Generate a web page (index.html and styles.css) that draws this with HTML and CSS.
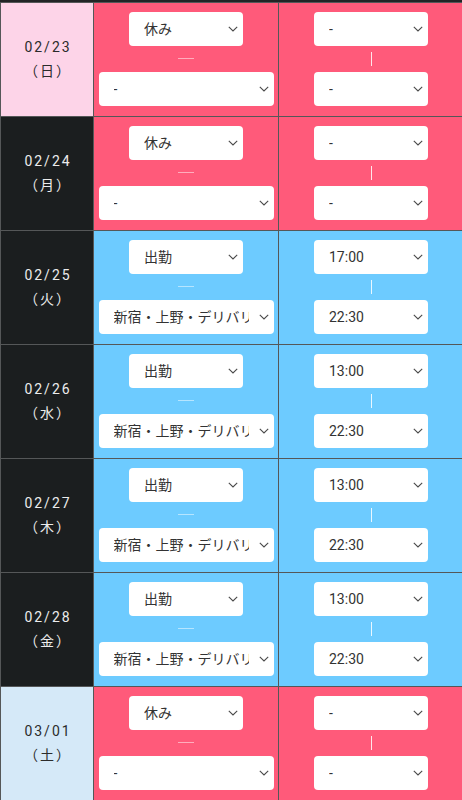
FILE: index.html
```html
<!DOCTYPE html>
<html lang="ja">
<head>
<meta charset="utf-8">
<link rel="stylesheet" href="styles.css">
</head>
<body>
<div class="sheet">
  <div class="date sun"><span>02/23</span><span>（日）</span></div>
  <div class="cell off">
    <div class="sel narrow"><span class="txt">休み</span><svg class="chev" viewBox="0 0 10 6"><path d="M0.8 0.8 L5 5 L9.2 0.8"/></svg></div>
    <div class="gap"><i class="hsep"></i></div>
    <div class="sel wide"><span class="txt">-</span><svg class="chev" viewBox="0 0 10 6"><path d="M0.8 0.8 L5 5 L9.2 0.8"/></svg></div>
  </div>
  <div class="cell off">
    <div class="sel narrow"><span class="txt">-</span><svg class="chev" viewBox="0 0 10 6"><path d="M0.8 0.8 L5 5 L9.2 0.8"/></svg></div>
    <div class="gap"><i class="vsep"></i></div>
    <div class="sel narrow"><span class="txt">-</span><svg class="chev" viewBox="0 0 10 6"><path d="M0.8 0.8 L5 5 L9.2 0.8"/></svg></div>
  </div>

  <div class="date wk"><span>02/24</span><span>（月）</span></div>
  <div class="cell off">
    <div class="sel narrow"><span class="txt">休み</span><svg class="chev" viewBox="0 0 10 6"><path d="M0.8 0.8 L5 5 L9.2 0.8"/></svg></div>
    <div class="gap"><i class="hsep"></i></div>
    <div class="sel wide"><span class="txt">-</span><svg class="chev" viewBox="0 0 10 6"><path d="M0.8 0.8 L5 5 L9.2 0.8"/></svg></div>
  </div>
  <div class="cell off">
    <div class="sel narrow"><span class="txt">-</span><svg class="chev" viewBox="0 0 10 6"><path d="M0.8 0.8 L5 5 L9.2 0.8"/></svg></div>
    <div class="gap"><i class="vsep"></i></div>
    <div class="sel narrow"><span class="txt">-</span><svg class="chev" viewBox="0 0 10 6"><path d="M0.8 0.8 L5 5 L9.2 0.8"/></svg></div>
  </div>

  <div class="date wk"><span>02/25</span><span>（火）</span></div>
  <div class="cell on">
    <div class="sel narrow"><span class="txt">出勤</span><svg class="chev" viewBox="0 0 10 6"><path d="M0.8 0.8 L5 5 L9.2 0.8"/></svg></div>
    <div class="gap"><i class="hsep"></i></div>
    <div class="sel wide"><span class="txt">新宿・上野・デリバリー</span><svg class="chev" viewBox="0 0 10 6"><path d="M0.8 0.8 L5 5 L9.2 0.8"/></svg></div>
  </div>
  <div class="cell on">
    <div class="sel narrow"><span class="txt">17:00</span><svg class="chev" viewBox="0 0 10 6"><path d="M0.8 0.8 L5 5 L9.2 0.8"/></svg></div>
    <div class="gap"><i class="vsep"></i></div>
    <div class="sel narrow"><span class="txt">22:30</span><svg class="chev" viewBox="0 0 10 6"><path d="M0.8 0.8 L5 5 L9.2 0.8"/></svg></div>
  </div>

  <div class="date wk"><span>02/26</span><span>（水）</span></div>
  <div class="cell on">
    <div class="sel narrow"><span class="txt">出勤</span><svg class="chev" viewBox="0 0 10 6"><path d="M0.8 0.8 L5 5 L9.2 0.8"/></svg></div>
    <div class="gap"><i class="hsep"></i></div>
    <div class="sel wide"><span class="txt">新宿・上野・デリバリー</span><svg class="chev" viewBox="0 0 10 6"><path d="M0.8 0.8 L5 5 L9.2 0.8"/></svg></div>
  </div>
  <div class="cell on">
    <div class="sel narrow"><span class="txt">13:00</span><svg class="chev" viewBox="0 0 10 6"><path d="M0.8 0.8 L5 5 L9.2 0.8"/></svg></div>
    <div class="gap"><i class="vsep"></i></div>
    <div class="sel narrow"><span class="txt">22:30</span><svg class="chev" viewBox="0 0 10 6"><path d="M0.8 0.8 L5 5 L9.2 0.8"/></svg></div>
  </div>

  <div class="date wk"><span>02/27</span><span>（木）</span></div>
  <div class="cell on">
    <div class="sel narrow"><span class="txt">出勤</span><svg class="chev" viewBox="0 0 10 6"><path d="M0.8 0.8 L5 5 L9.2 0.8"/></svg></div>
    <div class="gap"><i class="hsep"></i></div>
    <div class="sel wide"><span class="txt">新宿・上野・デリバリー</span><svg class="chev" viewBox="0 0 10 6"><path d="M0.8 0.8 L5 5 L9.2 0.8"/></svg></div>
  </div>
  <div class="cell on">
    <div class="sel narrow"><span class="txt">13:00</span><svg class="chev" viewBox="0 0 10 6"><path d="M0.8 0.8 L5 5 L9.2 0.8"/></svg></div>
    <div class="gap"><i class="vsep"></i></div>
    <div class="sel narrow"><span class="txt">22:30</span><svg class="chev" viewBox="0 0 10 6"><path d="M0.8 0.8 L5 5 L9.2 0.8"/></svg></div>
  </div>

  <div class="date wk"><span>02/28</span><span>（金）</span></div>
  <div class="cell on">
    <div class="sel narrow"><span class="txt">出勤</span><svg class="chev" viewBox="0 0 10 6"><path d="M0.8 0.8 L5 5 L9.2 0.8"/></svg></div>
    <div class="gap"><i class="hsep"></i></div>
    <div class="sel wide"><span class="txt">新宿・上野・デリバリー</span><svg class="chev" viewBox="0 0 10 6"><path d="M0.8 0.8 L5 5 L9.2 0.8"/></svg></div>
  </div>
  <div class="cell on">
    <div class="sel narrow"><span class="txt">13:00</span><svg class="chev" viewBox="0 0 10 6"><path d="M0.8 0.8 L5 5 L9.2 0.8"/></svg></div>
    <div class="gap"><i class="vsep"></i></div>
    <div class="sel narrow"><span class="txt">22:30</span><svg class="chev" viewBox="0 0 10 6"><path d="M0.8 0.8 L5 5 L9.2 0.8"/></svg></div>
  </div>

  <div class="date sat"><span>03/01</span><span>（土）</span></div>
  <div class="cell off">
    <div class="sel narrow"><span class="txt">休み</span><svg class="chev" viewBox="0 0 10 6"><path d="M0.8 0.8 L5 5 L9.2 0.8"/></svg></div>
    <div class="gap"><i class="hsep"></i></div>
    <div class="sel wide"><span class="txt">-</span><svg class="chev" viewBox="0 0 10 6"><path d="M0.8 0.8 L5 5 L9.2 0.8"/></svg></div>
  </div>
  <div class="cell off">
    <div class="sel narrow"><span class="txt">-</span><svg class="chev" viewBox="0 0 10 6"><path d="M0.8 0.8 L5 5 L9.2 0.8"/></svg></div>
    <div class="gap"><i class="vsep"></i></div>
    <div class="sel narrow"><span class="txt">-</span><svg class="chev" viewBox="0 0 10 6"><path d="M0.8 0.8 L5 5 L9.2 0.8"/></svg></div>
  </div>
</div>
</body>
</html>
```
FILE: styles.css
```css
html, body {
  margin: 0;
  padding: 0;
  overflow: hidden;
  background: #ffffff;
}

body {
  font-family: "Roboto", "Noto Sans CJK JP", sans-serif;
  font-size: 14px;
}

.sheet {
  display: grid;
  grid-template-columns: 92px 184px 184px;
  grid-auto-rows: 113px;
  gap: 1px;
  width: 464px;
  padding: 1px 0 0 1px;
  border-top: 2px solid #222425;
  background: #555758;
}

.date {
  display: flex;
  flex-direction: column;
  align-items: center;
  justify-content: center;
  line-height: 24px;
  letter-spacing: 2px;
  padding-left: 2px;
  padding-bottom: 1px;
  color: #2b2b2b;
}

.date.sun { background: #fdd4e8; }
.date.sat { background: #d5e9f8; }
.date.wk { background: #1b1e1f; color: #ececec; }

.cell {
  display: flex;
  flex-direction: column;
  align-items: center;
  padding-top: 9px;
}

.cell.off { background: #ff5a7a; }
.cell.on { background: #6dcbff; }

.sel {
  display: flex;
  align-items: center;
  height: 34px;
  box-sizing: border-box;
  background: #ffffff;
  border-radius: 4px;
  padding: 0 5px 0 15px;
  color: #333333;
}

.sel.narrow { width: 114px; }
.sel.wide { width: 175px; }

.txt {
  flex: 1;
  min-width: 0;
  overflow: hidden;
  white-space: nowrap;
  line-height: 20px;
}

.chev {
  width: 10px;
  height: 6px;
  margin-left: 10px;
  flex: none;
}

.chev path {
  fill: none;
  stroke: #4a4a4a;
  stroke-width: 1.1;
}

.gap {
  height: 26px;
  display: flex;
  align-items: center;
  justify-content: center;
}

.hsep {
  display: block;
  width: 16px;
  height: 1px;
  margin-bottom: 1px;
  background: rgba(255, 255, 255, 0.5);
}

.vsep {
  display: block;
  width: 1px;
  height: 14px;
  background: rgba(255, 255, 255, 0.85);
}
```
